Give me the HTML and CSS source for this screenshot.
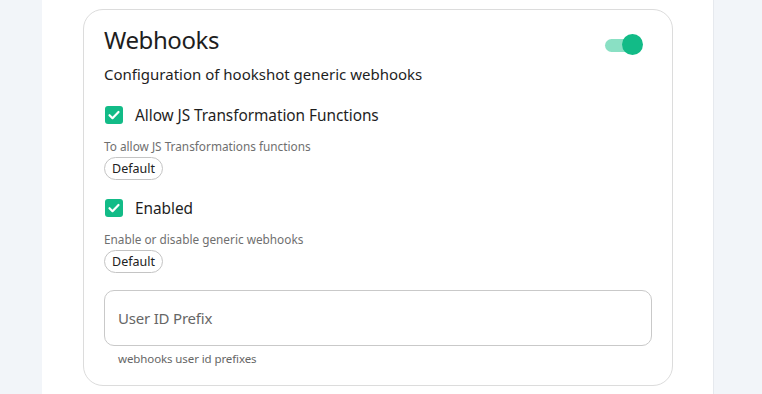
FILE: index.html
```html
<!DOCTYPE html>
<html>
<head>
<meta charset="utf-8">
<link rel="stylesheet" href="styles.css">
</head>
<body>
<div class="page">
  <div class="column">
    <section class="card">
      <div class="head">
        <h2 class="title">Webhooks</h2>
        <span class="toggle"><span class="track"></span><span class="knob"></span></span>
      </div>
      <p class="subtitle">Configuration of hookshot generic webhooks</p>

      <div class="field">
        <label class="check">
          <span class="box"><svg viewBox="0 0 18 18" width="18" height="18"><path d="M4.5 9.2l3 3 6-6.2" fill="none" stroke="#fff" stroke-width="2.2" stroke-linecap="round" stroke-linejoin="round"/></svg></span>
          <span class="check-label">Allow JS Transformation Functions</span>
        </label>
        <div class="desc">To allow JS Transformations functions</div>
        <span class="chip">Default</span>
      </div>

      <div class="field">
        <label class="check">
          <span class="box"><svg viewBox="0 0 18 18" width="18" height="18"><path d="M4.5 9.2l3 3 6-6.2" fill="none" stroke="#fff" stroke-width="2.2" stroke-linecap="round" stroke-linejoin="round"/></svg></span>
          <span class="check-label">Enabled</span>
        </label>
        <div class="desc">Enable or disable generic webhooks</div>
        <span class="chip">Default</span>
      </div>

      <div class="input-wrap">
        <div class="input">User ID Prefix</div>
        <div class="helper">webhooks user id prefixes</div>
      </div>
    </section>
  </div>
</div>
</body>
</html>
```

FILE: styles.css
```css
* { box-sizing: border-box; }
html, body { margin: 0; padding: 0; }
body {
  background: #f2f5f9;
  font-family: "Noto Sans", "DejaVu Sans", sans-serif;
  color: #222;
  height: 394px;
  overflow: hidden;
}
.page {
  display: flex;
  justify-content: flex-start;
  padding-left: 42px;
}
.column {
  width: 672px;
  background: #fff;
  border-right: 1px solid #e6e9ee;
  padding: 9px 40px 20px 41px;
  min-height: 394px;
}
.card {
  border: 1px solid #dcdcdc;
  border-radius: 20px;
  padding: 14px 20px 16px 20px;
  height: 377px;
}
.head {
  display: flex;
  justify-content: space-between;
  align-items: flex-start;
}
.title {
  margin: 0;
  font-weight: 400;
  font-size: 24px;
  line-height: 32px;
  letter-spacing: -0.4px;
  color: #1e1e1e;
}
.toggle {
  position: relative;
  width: 38px;
  height: 22px;
  margin: 10px 9px 0 0;
}
.track {
  position: absolute;
  left: 0;
  top: 5px;
  width: 34px;
  height: 13px;
  border-radius: 7px;
  background: #8ae0c4;
}
.knob {
  position: absolute;
  left: 17px;
  top: 0;
  width: 21px;
  height: 21px;
  border-radius: 50%;
  background: #12bb87;
}
.subtitle {
  margin: 7px 0 0;
  font-size: 15px;
  line-height: 22px;
  color: #1e1e1e;
}
.field {
  margin-top: 19px;
  display: flex;
  flex-direction: column;
  align-items: flex-start;
}
.field + .field { margin-top: 17px; }
.check {
  display: flex;
  align-items: center;
  gap: 12px;
  height: 22px;
}
.box {
  width: 18px;
  height: 18px;
  border-radius: 3px;
  background: #12bb87;
  display: inline-flex;
  margin-left: 1px;
}
.check-label {
  font-size: 15.4px;
  letter-spacing: -0.05px;
  color: #1e1e1e;
}
.desc {
  margin-top: 12px;
  font-size: 11.8px;
  line-height: 16px;
  color: #6f6f6f;
}
.chip {
  margin-top: 3px;
  border: 1px solid #c4c4c4;
  border-radius: 12px;
  padding: 0 7px;
  height: 23px;
  line-height: 21px;
  font-size: 12.5px;
  color: #222;
}
.input-wrap { margin-top: 17px; }
.input {
  height: 56px;
  border: 1px solid #c9c9c9;
  border-radius: 10px;
  padding: 0 13px;
  display: flex;
  align-items: center;
  font-size: 15px;
  color: #666;
  letter-spacing: -0.2px;
}
.helper {
  margin: 5px 0 0 14px;
  font-size: 11.5px;
  line-height: 16px;
  color: #666;
  letter-spacing: -0.1px;
}
```
